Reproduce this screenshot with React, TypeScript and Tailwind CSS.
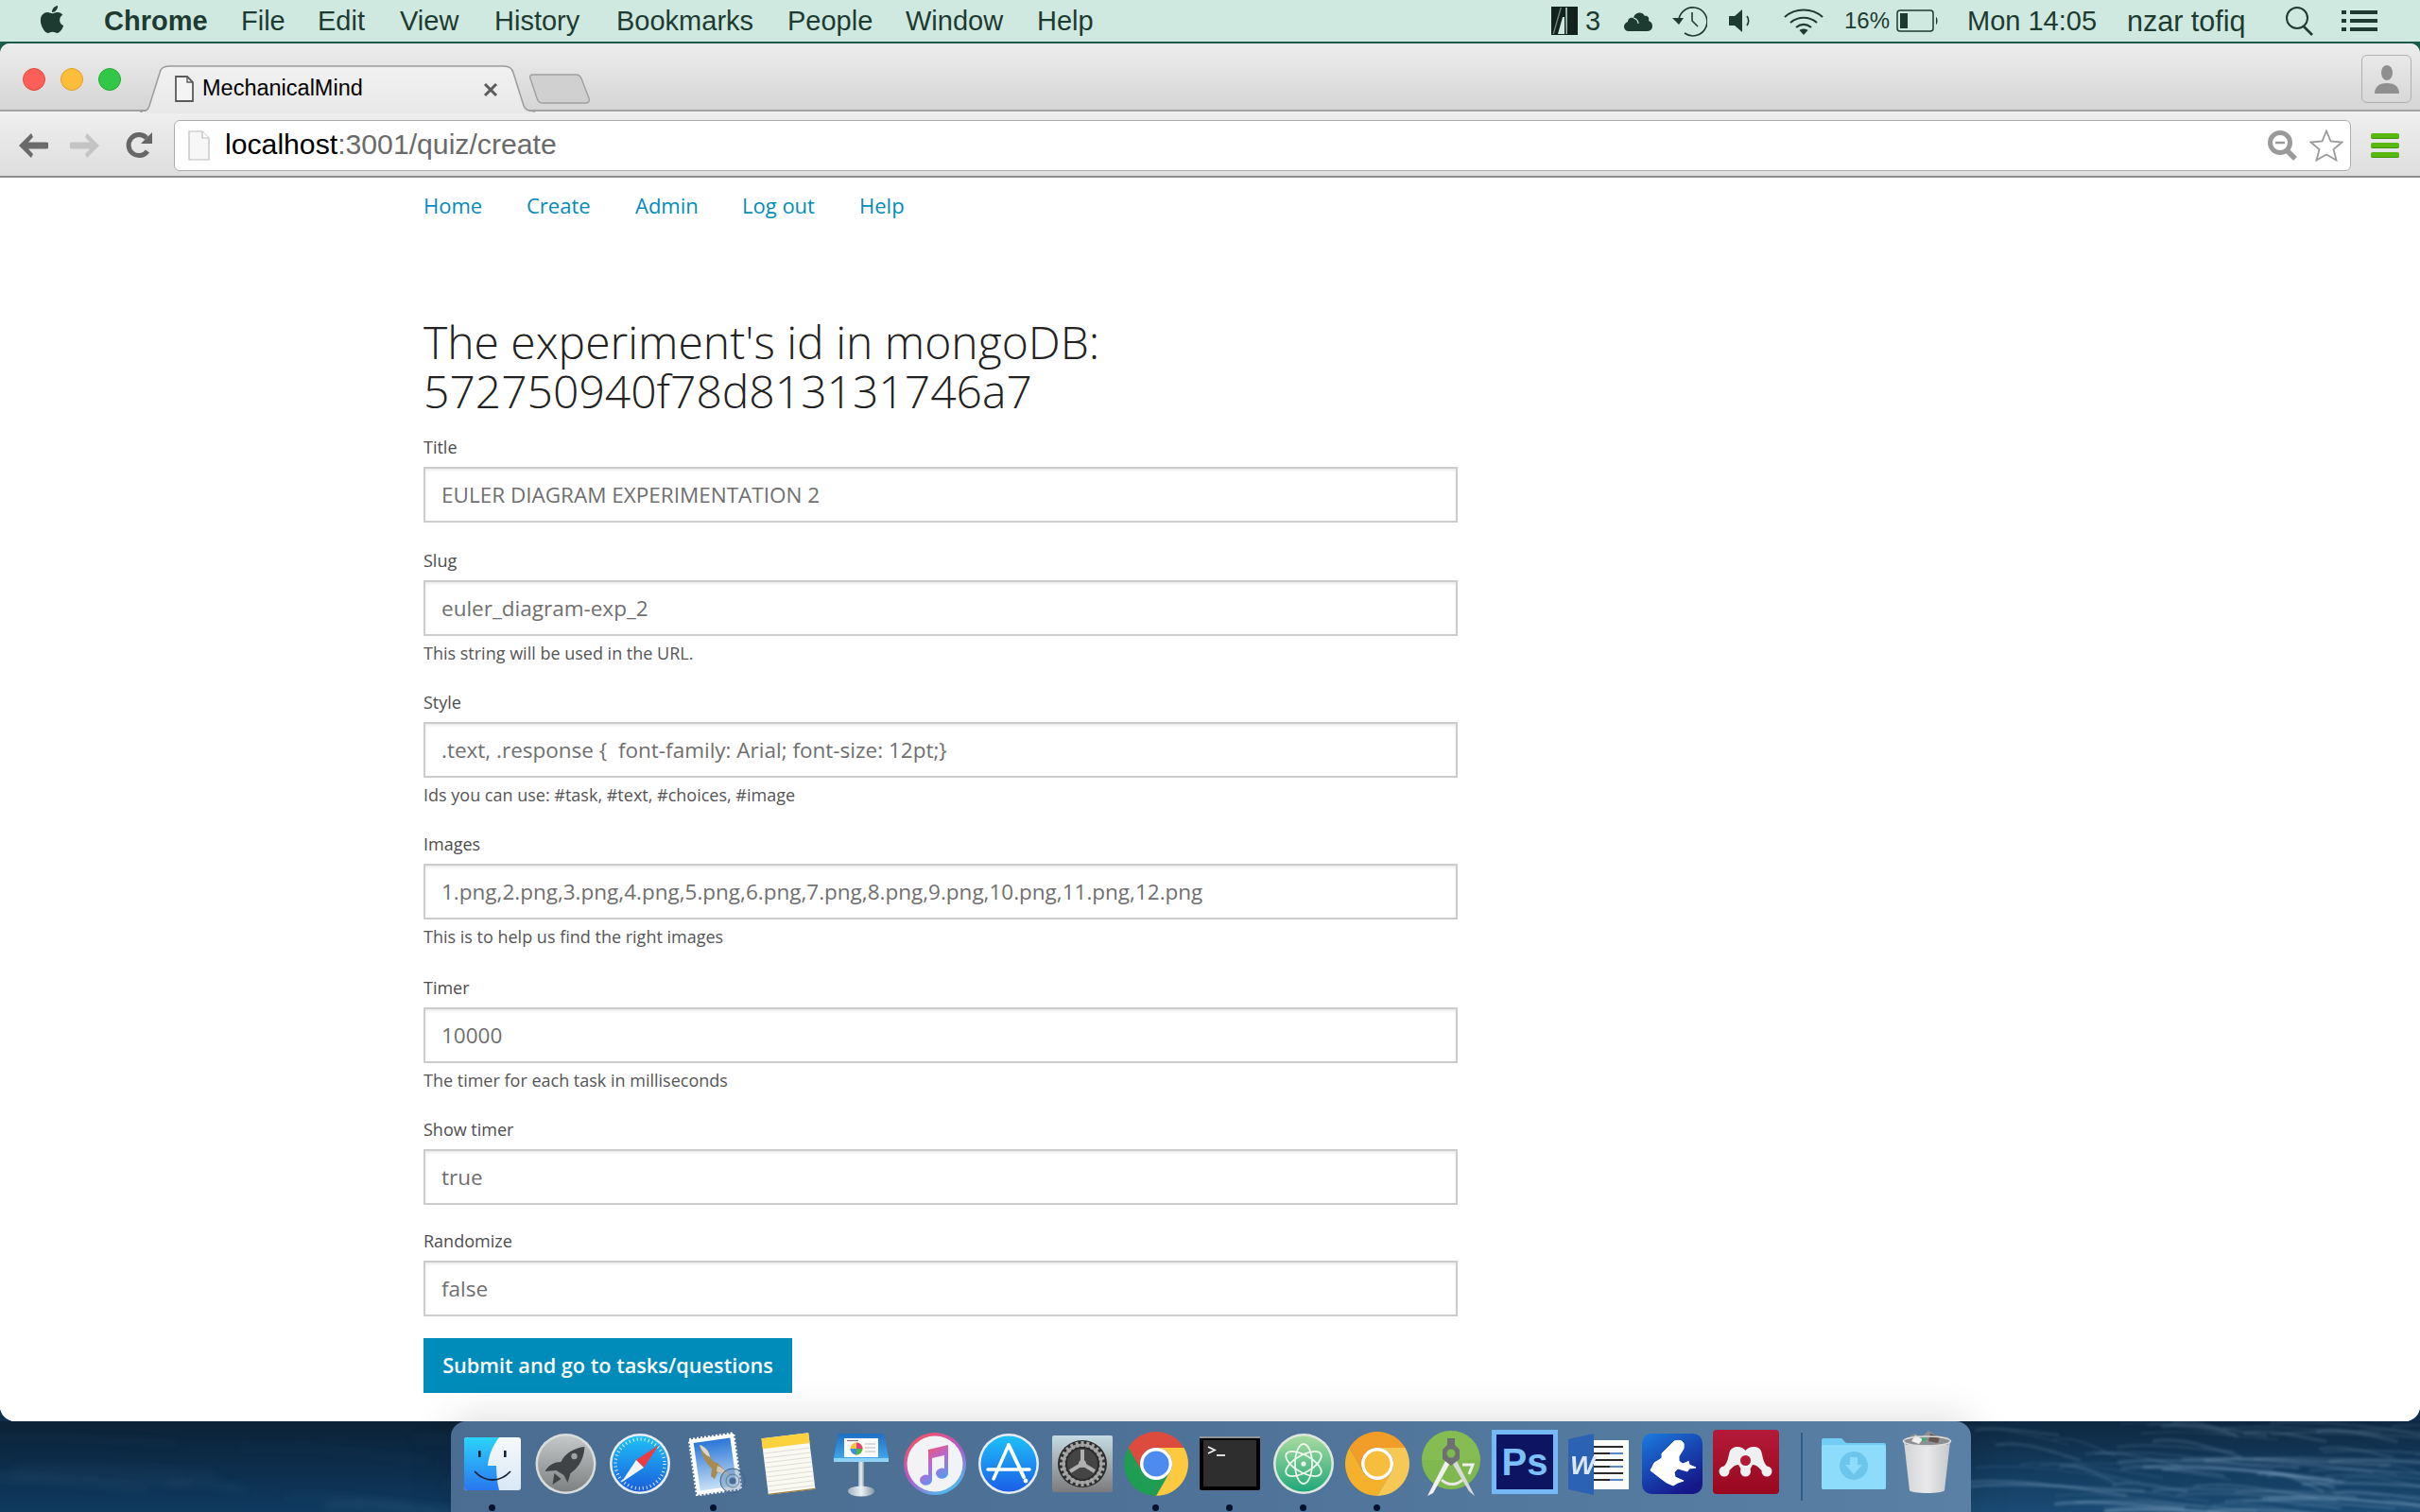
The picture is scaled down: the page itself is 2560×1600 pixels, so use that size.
import React from "react";
import { FaApple } from "react-icons/fa";

const MENU = "[font-family:'Liberation_Sans',sans-serif]";

/* ---------- wallpaper streaks ---------- */
function streaks(x0: number, x1: number, n: number, seed: number) {
  let s = seed;
  const r = () => {
    s = (s * 16807) % 2147483647;
    return s / 2147483647;
  };
  const out: { d: string; o: number; w: number }[] = [];
  for (let i = 0; i < n; i++) {
    const x = x0 + r() * (x1 - x0);
    const y = r() * 96;
    const l = 60 + r() * 170;
    const dy = 4 + r() * 14;
    out.push({
      d: `M${x} ${y} C${x + l * 0.3} ${y - 5} ${x + l * 0.6} ${y + dy * 0.3} ${x + l} ${y + dy}`,
      o: 0.1 + (y / 96) * 0.28 * r() + 0.06,
      w: 1 + r() * 2.5,
    });
  }
  return out;
}
const RIGHT_STREAKS = streaks(2060, 2560, 70, 4711);
const LEFT_STREAKS = streaks(-60, 470, 10, 917);

function Wallpaper() {
  return (
    <svg className="absolute left-0 bottom-0 w-[2560px] h-[96px]" viewBox="0 0 2560 96" preserveAspectRatio="none">
      <defs>
        <linearGradient id="wpL" x1="0" y1="0" x2="0" y2="1">
          <stop offset="0" stopColor="#0d2235" />
          <stop offset="0.45" stopColor="#0c2c49" />
          <stop offset="1" stopColor="#0f3a60" />
        </linearGradient>
        <linearGradient id="wpR" x1="0" y1="0" x2="0" y2="1">
          <stop offset="0" stopColor="#0e2840" />
          <stop offset="0.5" stopColor="#133a5c" />
          <stop offset="1" stopColor="#1a4b74" />
        </linearGradient>
        <filter id="blur1" x="-10%" y="-100%" width="120%" height="300%">
          <feGaussianBlur stdDeviation="1.4" />
        </filter>
        <filter id="blur2" x="-10%" y="-100%" width="120%" height="300%">
          <feGaussianBlur stdDeviation="5" />
        </filter>
      </defs>
      <rect x="0" y="0" width="1300" height="96" fill="url(#wpL)" />
      <rect x="1300" y="0" width="1260" height="96" fill="url(#wpR)" />
      <g filter="url(#blur2)" fill="none" stroke="#7fa6c6">
        {LEFT_STREAKS.map((p, i) => (
          <path key={i} d={p.d} strokeWidth={p.w + 3} opacity={p.o * 0.3} />
        ))}
      </g>
      <g filter="url(#blur1)" fill="none" stroke="#8fb2cf">
        {RIGHT_STREAKS.map((p, i) => (
          <path key={i} d={p.d} strokeWidth={p.w} opacity={p.o} />
        ))}
      </g>
    </svg>
  );
}

/* ---------- menu bar ---------- */
function AdobeIcon() {
  return (
    <svg className="w-[28px] h-[30px]" viewBox="0 0 28 30">
      <rect width="28" height="30" fill="#12231d" />
      <path d="M15 1 L17 1 L17 29 L15.5 29 Z" fill="#9fb5ac" />
      <path d="M12 11 L14 11 L14 29 L7 29 Z" fill="#cfe9e0" />
      <path d="M9.5 1 L11 1 L3 29 L1.5 29 Z" fill="#6e8279" />
    </svg>
  );
}
function CloudIcon() {
  return (
    <svg className="w-[34px] h-[24px]" viewBox="0 0 34 24">
      <path d="M7 23 C1 23 0 15 6 13 C6 9 10 8 12 9 C13 3 21 1 24 7 C27 6 29 9 28 12 C34 14 33 23 27 23 Z" fill="#1d3b31" />
      <path d="M12 9 C15 10 17 12 17 15" stroke="#cfe9e0" strokeWidth="1.2" fill="none" />
    </svg>
  );
}
function ClockIcon() {
  return (
    <svg className="w-[38px] h-[34px]" viewBox="0 0 38 34" fill="none" stroke="#1d3b31" strokeWidth="1.6">
      <path d="M8 20 A15 15 0 1 1 14 30" />
      <path d="M1 14 L8 21 L13 14 Z" fill="#1d3b31" stroke="none" />
      <path d="M22 8 L22 17 L28 23" />
    </svg>
  );
}
function SpeakerIcon() {
  return (
    <svg className="w-[26px] h-[26px]" viewBox="0 0 26 26">
      <path d="M0 8 H6 L14 1 V25 L6 18 H0 Z" fill="#1d3b31" />
      <path d="M19 8 C21 11 21 15 19 18" stroke="#1d3b31" strokeWidth="1.6" fill="none" />
    </svg>
  );
}
function WifiIcon() {
  return (
    <svg className="w-[44px] h-[30px]" viewBox="0 0 44 30" fill="none" stroke="#1d3b31" strokeWidth="2.2">
      <path d="M2 11 C13 1 31 1 42 11" />
      <path d="M8 17 C16 10 28 10 36 17" />
      <path d="M14 22 C19 18 25 18 30 22" />
      <path d="M17.5 25 L22 30 L26.5 25 C24 23 20 23 17.5 25 Z" fill="#1d3b31" stroke="none" />
    </svg>
  );
}
function BatteryIcon() {
  return (
    <svg className="w-[46px] h-[24px]" viewBox="0 0 46 24">
      <rect x="1" y="1" width="38" height="22" rx="3" fill="none" stroke="#1d3b31" strokeWidth="1.5" />
      <rect x="4" y="4" width="8" height="16" fill="#1d3b31" />
      <path d="M42 8 C44 9 44 15 42 16 Z" fill="#1d3b31" />
    </svg>
  );
}
function SearchIcon() {
  return (
    <svg className="w-[31px] h-[32px]" viewBox="0 0 31 32" fill="none" stroke="#1d3b31" strokeWidth="2">
      <circle cx="13" cy="13" r="11" />
      <path d="M20 22 L29 31" strokeWidth="2.6" />
    </svg>
  );
}
function ListIcon() {
  return (
    <svg className="w-[38px] h-[22px]" viewBox="0 0 38 22" fill="#1d3b31">
      <rect x="0" y="0" width="5" height="4" />
      <rect x="9" y="0" width="29" height="4" />
      <rect x="0" y="9" width="5" height="4" />
      <rect x="9" y="9" width="29" height="4" />
      <rect x="0" y="18" width="5" height="4" />
      <rect x="9" y="18" width="29" height="4" />
    </svg>
  );
}

function MenuBar() {
  return (
    <div className={`${MENU} h-[46px] shrink-0 flex items-center bg-[#cfe9e0] border-b-2 border-[#1c5a4a] text-[#1d3b31] text-[29px] leading-none whitespace-nowrap`}>
      <FaApple className="ml-[39px] w-[32px] h-[33px] text-[#1d3b31] -mt-[3px]" />
      <span className="ml-[39px] font-bold w-[145px]">Chrome</span>
      <span className="w-[81px]">File</span>
      <span className="w-[87px]">Edit</span>
      <span className="w-[100px]">View</span>
      <span className="w-[129px]">History</span>
      <span className="w-[181px]">Bookmarks</span>
      <span className="w-[125px]">People</span>
      <span className="w-[139px]">Window</span>
      <span>Help</span>
      <div className="ml-auto flex items-center mr-[45px]">
        <AdobeIcon />
        <span className="ml-[8px] w-[39px]">3</span>
        <CloudIcon />
        <span className="w-[18px]" />
        <ClockIcon />
        <span className="w-[23px]" />
        <SpeakerIcon />
        <span className="w-[31px]" />
        <WifiIcon />
        <span className="ml-[21px] w-[55px] text-[24px]">16%</span>
        <BatteryIcon />
        <span className="ml-[29px] w-[169px]">Mon 14:05</span>
        <span className="w-[167px] text-[30.5px]">nzar tofiq</span>
        <SearchIcon />
        <span className="w-[29px]" />
        <ListIcon />
      </div>
    </div>
  );
}

/* ---------- browser chrome ---------- */
function PageIcon({ big }: { big?: boolean }) {
  return big ? (
    <svg className="w-[23px] h-[32px]" viewBox="0 0 23 32">
      <path d="M1 1 H15 L22 8 V31 H1 Z" fill="#f7f7f7" stroke="#bdbdbd" strokeWidth="1.2" />
      <path d="M15 1 V8 H22" fill="#fff" stroke="#bdbdbd" strokeWidth="1.2" />
    </svg>
  ) : (
    <svg className="w-[20px] h-[28px]" viewBox="0 0 20 28">
      <path d="M1 1 H13 L19 7 V27 H1 Z" fill="#f4f4f4" stroke="#5a5a5a" strokeWidth="1.8" />
      <path d="M13 1 V7 H19" fill="none" stroke="#5a5a5a" strokeWidth="1.4" />
    </svg>
  );
}

function TabStrip() {
  return (
    <div className="h-[72px] shrink-0 flex items-start bg-gradient-to-b from-[#ededed] to-[#d5d5d5] border-b-2 border-[#a3a3a3] rounded-t-[10px]">
      <div className="flex gap-[16px] ml-[24px] mt-[26px]">
        <div className="w-[24px] h-[24px] rounded-full bg-[#fc5f57] border border-[#e14942]" />
        <div className="w-[24px] h-[24px] rounded-full bg-[#fdbc3a] border border-[#dfa023]" />
        <div className="w-[24px] h-[24px] rounded-full bg-[#33c748] border border-[#27aa35]" />
      </div>
      <div className="relative ml-[20px] mt-[23px] w-[420px] h-[51px] shrink-0">
        <svg className="absolute inset-0 w-full h-full" viewBox="0 0 420 51">
          <defs>
            <linearGradient id="tabG" x1="0" y1="0" x2="0" y2="1">
              <stop offset="0" stopColor="#f1f1f1" />
              <stop offset="1" stopColor="#e9e9e9" />
            </linearGradient>
          </defs>
          <path d="M0 49 C8 49 9 46 10 43 L21 8 C22 3 26 1 31 1 H385 C391 1 394 4 395 8 L406 43 C407 46 409 49 418 49" fill="url(#tabG)" stroke="#9b9b9b" strokeWidth="1.5" />
          <rect x="3" y="49" width="412" height="2" fill="#e9e9e9" />
        </svg>
        <div className="relative flex items-center h-full pl-[37px] pb-[2px]">
          <PageIcon />
          <span className={`${MENU} ml-[9px] text-[23.5px] leading-none text-black`}>MechanicalMind</span>
          <svg className="ml-[127px] mt-[2px] w-[16px] h-[16px]" viewBox="0 0 16 16" stroke="#5c5c5c" strokeWidth="3">
            <path d="M2 2 L14 14 M14 2 L2 14" />
          </svg>
        </div>
      </div>
      <svg className="mt-[32px] w-[64px] h-[32px] shrink-0 -ml-[8px]" viewBox="0 0 64 32">
        <path d="M3 1 H50 C53 1 54 3 55 5 L63 26 C64 30 62 31 59 31 H14 C11 31 9 29 8 26 L1 5 C0 3 1 1 3 1 Z" fill="#d0d0d0" stroke="#9f9f9f" strokeWidth="1.4" />
      </svg>
      <div className="ml-auto mr-[9px] mt-[12px] w-[53px] h-[51px] rounded-[6px] border border-[#b0b0b0] flex items-center justify-center">
        <svg className="w-[26px] h-[30px]" viewBox="0 0 26 30" fill="#8f8f8f">
          <ellipse cx="13" cy="8" rx="6" ry="8" />
          <path d="M0 30 C0 22 6 19 13 19 C20 19 26 22 26 30 Z" />
        </svg>
      </div>
    </div>
  );
}

function Toolbar() {
  return (
    <div className="h-[70px] pt-[3px] shrink-0 flex items-center bg-gradient-to-b from-[#efefef] to-[#dedede] border-b-2 border-[#8e8e8e]">
      <svg className="ml-[19px] w-[32px] h-[28px]" viewBox="0 0 32 28">
        <path d="M14 1 L1 14 L14 27 L16 23 L11 17.5 H30 A3 3 0 0 0 30 10.5 H11 L16 5 Z" fill="#6a6a6a" />
      </svg>
      <svg className="ml-[23px] w-[32px] h-[28px]" viewBox="0 0 32 28">
        <path d="M18 1 L31 14 L18 27 L16 23 L21 17.5 H2 A3 3 0 0 1 2 10.5 H21 L16 5 Z" fill="#c4c4c4" />
      </svg>
      <svg className="ml-[27px] w-[29px] h-[29px]" viewBox="0 0 29 29" fill="none">
        <path d="M23 21 A11 11 0 1 1 22 7" stroke="#666" strokeWidth="5" />
        <path d="M28 1 V13 H16 Z" fill="#666" />
      </svg>
      <div className="ml-[22px] h-[54px] w-[2303px] rounded-[6px] bg-white border border-[#adadad] flex items-center pl-[14px] pr-[7px]">
        <PageIcon big />
        <span className={`${MENU} ml-[16px] text-[30.2px] leading-none text-black`}>
          localhost<span className="text-[#6a6a6a]">:3001/quiz/create</span>
        </span>
        <svg className="ml-auto w-[32px] h-[32px]" viewBox="0 0 32 32" fill="none" stroke="#9a9a9a">
          <circle cx="13" cy="13" r="10.5" strokeWidth="5" />
          <path d="M20 21 L29 30" strokeWidth="5.5" />
          <path d="M8 13 H18" strokeWidth="2.6" />
        </svg>
        <svg className="ml-[12px] w-[36px] h-[34px]" viewBox="0 0 36 34" fill="#fff" stroke="#9a9a9a" strokeWidth="1.8">
          <path d="M18 1.5 L22.5 12.5 L34.5 13.5 L25.5 21 L28.5 32.5 L18 26.5 L7.5 32.5 L10.5 21 L1.5 13.5 L13.5 12.5 Z" />
        </svg>
      </div>
      <div className="ml-[21px] w-[30px] flex flex-col gap-[4px]">
        <div className="h-[6px] rounded-[2px] bg-[#58b80f] border-b border-[#3f8f08]" />
        <div className="h-[6px] rounded-[2px] bg-[#58b80f] border-b border-[#3f8f08]" />
        <div className="h-[6px] rounded-[2px] bg-[#58b80f] border-b border-[#3f8f08]" />
      </div>
    </div>
  );
}

/* ---------- form ---------- */
const BODY = "[font-family:'Open_Sans',sans-serif]";

function Field({ label, value, help, cls }: { label: string; value: string; help?: string; cls: string }) {
  return (
    <div className={cls}>
      <label className="block h-[24px] text-[18px] leading-[22px] text-[#4d4d4d]">{label}</label>
      <input
        readOnly
        value={value}
        className="mt-[8px] block w-[1094px] h-[59px] border-2 border-[#cccccc] bg-white px-[17px] text-[22.5px] text-[#6f6f6f] outline-none shadow-[inset_0_2px_3px_rgba(0,0,0,0.08)]"
      />
      {help && <p className="mt-[7px] h-[24px] text-[18px] leading-[22px] text-[#555555]">{help}</p>}
    </div>
  );
}

function Page() {
  return (
    <div className={`${BODY} flex-1 bg-white pl-[448px] overflow-hidden`}>
      <nav className="flex h-[60px] pt-[14px] text-[22px] leading-[30px] text-[#008cba]">
        <a className="w-[109px]">Home</a>
        <a className="w-[115px]">Create</a>
        <a className="w-[113px]">Admin</a>
        <a className="w-[124px]">Log out</a>
        <a>Help</a>
      </nav>
      <h3 className="mt-[88px] w-[1100px] text-[48px] leading-[52px] font-light text-[#222222]">
        The experiment's id in mongoDB:
        <br />
        572750940f78d813131746a7
      </h3>
      <Field cls="mt-[22px]" label="Title" value="EULER DIAGRAM EXPERIMENTATION 2" />
      <Field cls="mt-[29px]" label="Slug" value="euler_diagram-exp_2" help="This string will be used in the URL." />
      <Field cls="mt-[28px]" label="Style" value=".text, .response {  font-family: Arial; font-size: 12pt;}" help="Ids you can use: #task, #text, #choices, #image" />
      <Field cls="mt-[28px]" label="Images" value="1.png,2.png,3.png,4.png,5.png,6.png,7.png,8.png,9.png,10.png,11.png,12.png" help="This is to help us find the right images" />
      <Field cls="mt-[30px]" label="Timer" value="10000" help="The timer for each task in milliseconds" />
      <Field cls="mt-[28px]" label="Show timer" value="true" />
      <Field cls="mt-[27px]" label="Randomize" value="false" />
      <button className="mt-[23px] block w-[390px] h-[58px] bg-[#008cba] text-white text-[21.7px] font-semibold">
        Submit and go to tasks/questions
      </button>
    </div>
  );
}

/* ---------- dock icons ---------- */
function Finder() {
  return (
    <svg className="w-full h-full" viewBox="0 0 60 56">
      <defs>
        <linearGradient id="fL" x1="0" y1="0" x2="0" y2="1">
          <stop offset="0" stopColor="#2bd3fb" />
          <stop offset="1" stopColor="#2a76ef" />
        </linearGradient>
        <linearGradient id="fR" x1="0" y1="0" x2="0" y2="1">
          <stop offset="0" stopColor="#f6f9fb" />
          <stop offset="1" stopColor="#d9e8f6" />
        </linearGradient>
      </defs>
      <rect width="60" height="56" rx="3" fill="url(#fR)" />
      <path d="M3 0 H37 C31 8 26 18 25 30 H34 C34 38 35 48 37 56 H3 A3 3 0 0 1 0 53 V3 A3 3 0 0 1 3 0 Z" fill="url(#fL)" />
      <rect x="15" y="14" width="2.6" height="7" fill="#14233a" />
      <rect x="42" y="14" width="2.6" height="7" fill="#14233a" />
      <path d="M11 36 C22 48 38 48 49 36" fill="none" stroke="#14233a" strokeWidth="1.8" />
    </svg>
  );
}
function Launchpad() {
  return (
    <svg className="w-full h-full" viewBox="0 0 64 64">
      <defs>
        <linearGradient id="lp" x1="0" y1="0" x2="0" y2="1">
          <stop offset="0" stopColor="#c5c8c9" />
          <stop offset="1" stopColor="#7d8182" />
        </linearGradient>
      </defs>
      <circle cx="32" cy="32" r="32" fill="#d9dcdc" />
      <circle cx="32" cy="32" r="29.5" fill="url(#lp)" />
      <path d="M52 14 C51 30 43 38 37 42 L34 52 L30 44 L22 39 L10 40 C14 33 20 30 27 30 C31 21 41 15 52 14 Z" fill="#3f4345" />
      <path d="M20 42 L27 48 L18 54 Z" fill="#3f4345" />
      <circle cx="41" cy="24" r="3.2" fill="#9da1a2" />
    </svg>
  );
}
function Safari() {
  return (
    <svg className="w-full h-full" viewBox="0 0 64 64">
      <defs>
        <linearGradient id="sf" x1="0" y1="0" x2="0" y2="1">
          <stop offset="0" stopColor="#1fc0f6" />
          <stop offset="1" stopColor="#1a5edd" />
        </linearGradient>
      </defs>
      <circle cx="32" cy="32" r="32" fill="#e8eef3" />
      <circle cx="32" cy="32" r="29.5" fill="url(#sf)" />
      <circle cx="32" cy="32" r="26" fill="none" stroke="#fff" strokeWidth="3.5" strokeDasharray="1 3.08" opacity="0.85" />
      <path d="M52 12 L36 36 L28 28 Z" fill="#ee3a40" />
      <path d="M12 52 L28 28 L36 36 Z" fill="#f3f4f5" />
    </svg>
  );
}
function Mail() {
  return (
    <svg className="w-full h-full" viewBox="0 0 65 68">
      <defs>
        <linearGradient id="ml" x1="0" y1="0" x2="0" y2="1">
          <stop offset="0" stopColor="#2a76d8" />
          <stop offset="1" stopColor="#c5e0f4" />
        </linearGradient>
      </defs>
      <g transform="rotate(-8 30 34)">
        <rect x="7" y="5" width="47" height="59" fill="#fff" />
        <rect x="7" y="5" width="47" height="59" fill="none" stroke="#fff" strokeWidth="3" strokeDasharray="2 2" />
        <rect x="11" y="9" width="39" height="51" fill="url(#ml)" />
      </g>
      <path d="M14 14 C20 16 24 20 25 26 L29 32 L33 33 L47 47 C41 43 36 44 33 43 L30 50 L26 47 L27 39 C20 33 16 24 14 14 Z" fill="#a8894f" />
      <path d="M14 14 C20 16 24 20 25 27 C20 25 16 20 14 14 Z" fill="#dcd8cf" />
      <path d="M33 36 C38 38 42 42 47 47 C41 45 36 44 32 42 Z" fill="#cfc9bb" />
      <circle cx="49" cy="52" r="13" fill="#5578a0" fillOpacity="0.35" stroke="#3f6188" strokeWidth="1" />
      <circle cx="49" cy="52" r="7" fill="none" stroke="#3f6188" strokeWidth="1" opacity="0.7" />
      <circle cx="49" cy="52" r="3.5" fill="#4a6c94" />
    </svg>
  );
}
function Notes() {
  return (
    <svg className="w-full h-full" viewBox="0 0 59 67">
      <g transform="rotate(-7 30 34)">
        <rect x="5" y="4" width="50" height="60" fill="#fbfaf2" />
        <rect x="5" y="4" width="50" height="11" fill="#fcd23f" />
        {[20, 25, 30, 35, 40, 45, 50, 55, 60].map((y) => (
          <path key={y} d={`M5 ${y} H55`} stroke="#d6d6d0" strokeWidth="0.8" />
        ))}
        <rect x="5" y="63" width="50" height="1.2" fill="#9c7e3b" />
      </g>
    </svg>
  );
}
function Keynote() {
  return (
    <svg className="w-full h-full" viewBox="0 0 58 67">
      <defs>
        <linearGradient id="kn" x1="0" y1="0" x2="0" y2="1">
          <stop offset="0" stopColor="#1c6fc6" />
          <stop offset="1" stopColor="#3fa6ec" />
        </linearGradient>
        <linearGradient id="kp" x1="0" y1="0" x2="1" y2="0">
          <stop offset="0" stopColor="#9eb2c2" />
          <stop offset="0.5" stopColor="#eef2f5" />
          <stop offset="1" stopColor="#8397a7" />
        </linearGradient>
      </defs>
      <rect x="26" y="30" width="6" height="28" fill="url(#kp)" />
      <ellipse cx="29" cy="61" rx="14" ry="5.5" fill="url(#kp)" />
      <path d="M5 0 H53 L58 26 H0 Z" fill="url(#kn)" />
      <rect x="0" y="26" width="58" height="4" fill="#8ed2f6" />
      <rect x="11" y="5" width="36" height="20" fill="#fafafa" />
      <circle cx="24" cy="16" r="6.5" fill="#f2c53d" />
      <path d="M24 16 V9.5 A6.5 6.5 0 0 1 30.5 16 Z" fill="#e0417a" />
      <path d="M24 16 H30.5 A6.5 6.5 0 0 1 24 22.5 Z" fill="#4cb548" />
      <path d="M24 16 V22.5 A6.5 6.5 0 0 1 17.5 16 Z" fill="#3f8fdf" />
      <path d="M33 11 H44 M33 15 H44 M33 19 H44" stroke="#cfcfcf" strokeWidth="1.6" />
      <path d="M14 7.5 H26" stroke="#777" strokeWidth="1.2" />
    </svg>
  );
}
function ITunes() {
  return (
    <svg className="w-full h-full" viewBox="0 0 66 66">
      <defs>
        <linearGradient id="ir" x1="0.2" y1="0" x2="0.8" y2="1">
          <stop offset="0" stopColor="#f9525f" />
          <stop offset="0.5" stopColor="#b45ad0" />
          <stop offset="1" stopColor="#3dcaf0" />
        </linearGradient>
        <linearGradient id="in" x1="0.2" y1="0" x2="0.7" y2="1">
          <stop offset="0" stopColor="#f9505f" />
          <stop offset="0.5" stopColor="#b26ad8" />
          <stop offset="1" stopColor="#47a3f0" />
        </linearGradient>
      </defs>
      <circle cx="33" cy="33" r="33" fill="url(#ir)" />
      <circle cx="33" cy="33" r="29.5" fill="#f1f3f5" />
      <path d="M26 18 L47 13 V43 A6.5 5.6 0 1 1 43 38 V24 L30 27 V50 A6.5 5.6 0 1 1 26 45 Z" fill="url(#in)" />
    </svg>
  );
}
function AppStore() {
  return (
    <svg className="w-full h-full" viewBox="0 0 64 64">
      <defs>
        <linearGradient id="as" x1="0" y1="0" x2="0" y2="1">
          <stop offset="0" stopColor="#1dc0f8" />
          <stop offset="1" stopColor="#1c5ee8" />
        </linearGradient>
      </defs>
      <circle cx="32" cy="32" r="32" fill="#e6edf2" />
      <circle cx="32" cy="32" r="29.5" fill="url(#as)" />
      <g stroke="#fff" fill="none" strokeLinecap="round">
        <path d="M10 38 H54" strokeWidth="3.5" />
        <path d="M32 12 L16 48" strokeWidth="3.5" />
        <path d="M32 12 L48 46" strokeWidth="4" />
      </g>
      <circle cx="50" cy="50" r="2.4" fill="#fff" />
    </svg>
  );
}
function Prefs() {
  const teeth = Array.from({ length: 24 }, (_, i) => i * 15);
  return (
    <svg className="w-full h-full" viewBox="0 0 64 60">
      <defs>
        <linearGradient id="pf" x1="0" y1="0" x2="0" y2="1">
          <stop offset="0" stopColor="#c6dbe3" />
          <stop offset="1" stopColor="#7b7b7b" />
        </linearGradient>
      </defs>
      <rect width="64" height="60" rx="2" fill="url(#pf)" />
      <ellipse cx="32" cy="30" rx="26" ry="25" fill="#2d2d2d" />
      <circle cx="32" cy="30" r="20" fill="none" stroke="#9a9a9a" strokeWidth="3" />
      {teeth.map((a) => (
        <rect key={a} x="30.5" y="6" width="3" height="6" fill="#a6a6a6" transform={`rotate(${a} 32 30)`} />
      ))}
      <circle cx="32" cy="30" r="16" fill="#454545" />
      <g stroke="#b0b0b0" strokeWidth="4">
        <path d="M32 30 V15" />
        <path d="M32 30 L19 38" />
        <path d="M32 30 L45 38" />
      </g>
      <circle cx="32" cy="30" r="4" fill="#b0b0b0" />
    </svg>
  );
}
function ChromeLogo({ a, b, c, d }: { a: string; b: string; c: string; d: string }) {
  return (
    <svg className="w-full h-full" viewBox="0 0 100 100">
      <path d="M6.7 25 A50 50 0 0 1 93.3 25 H50 A25 25 0 0 0 28.35 62.5 Z" fill={a} />
      <path d="M6.7 25 A50 50 0 0 0 50 100 L71.65 62.5 A25 25 0 0 1 28.35 62.5 Z" fill={b} />
      <path d="M50 100 A50 50 0 0 0 93.3 25 H50 A25 25 0 0 1 71.65 62.5 Z" fill={c} />
      <circle cx="50" cy="50" r="25" fill="#fff" />
      <circle cx="50" cy="50" r="20" fill={d} />
    </svg>
  );
}
function Terminal() {
  return (
    <svg className="w-full h-full" viewBox="0 0 64 57">
      <rect width="64" height="57" rx="2" fill="#000" />
      <rect x="0" y="0" width="64" height="2" fill="#8f949a" />
      <rect x="4" y="4" width="56" height="49" fill="#2e2e2e" />
      <path d="M9 11 L16 14.5 L9 18" stroke="#f2f2f2" strokeWidth="1.8" fill="none" />
      <path d="M18 20 H27" stroke="#f2f2f2" strokeWidth="1.8" />
    </svg>
  );
}
function Atom() {
  return (
    <svg className="w-full h-full" viewBox="0 0 64 64">
      <defs>
        <linearGradient id="at" x1="0" y1="0" x2="0" y2="1">
          <stop offset="0" stopColor="#a9dba0" />
          <stop offset="1" stopColor="#1fa878" />
        </linearGradient>
      </defs>
      <circle cx="32" cy="32" r="32" fill="#dfe7df" />
      <circle cx="32" cy="32" r="29.5" fill="url(#at)" />
      <g fill="none" stroke="#eef7ee" strokeWidth="1.8">
        <ellipse cx="32" cy="32" rx="21" ry="9" transform="rotate(30 32 32)" />
        <ellipse cx="32" cy="32" rx="21" ry="9" transform="rotate(-30 32 32)" />
        <ellipse cx="32" cy="32" rx="9" ry="21" />
      </g>
      <circle cx="32" cy="32" r="2.6" fill="#eef7ee" />
    </svg>
  );
}
function AndroidStudio() {
  return (
    <svg className="w-full h-full" viewBox="0 0 62 70">
      <circle cx="31" cy="31" r="31" fill="#7fb84e" />
      <path d="M0 31 A31 31 0 0 1 62 31 Z" fill="#8cc158" opacity="0.5" />
      <path d="M21 52 C27 58 37 58 43 52" fill="none" stroke="#e8e8e8" strokeWidth="3" />
      <path d="M26 30 L6 69 L12 66 L30 34 Z" fill="#f0f0f0" />
      <path d="M36 30 L56 69 L50 64 L32 34 Z" fill="#d9d9d9" />
      <path d="M27 15 V8 H35 V15 L40 20 V30 L31 37 L22 30 V20 Z" fill="#6d7073" />
      <circle cx="31" cy="24" r="4.5" fill="#7fb84e" />
      <path d="M43 36 H54 L50 46" fill="none" stroke="#f0f0f0" strokeWidth="3" />
    </svg>
  );
}
function Photoshop() {
  return (
    <div className="w-full h-full border-[5px] border-[#74b8f5] bg-[#0d1563] flex items-center justify-center">
      <span className="[font-family:'Liberation_Sans',sans-serif] font-bold text-[40px] leading-none text-[#7cc0fa]">Ps</span>
    </div>
  );
}
function Word() {
  return (
    <svg className="w-full h-full" viewBox="0 0 64 65">
      <rect x="26" y="7" width="38" height="52" fill="#fbfbfb" />
      {[14, 21, 28, 35, 42, 49].map((y, i) => (
        <g key={y}>
          <path d={`M27 ${y} H44`} stroke="#2a2a2a" strokeWidth="2" />
          <path d={`M44 ${y} H58`} stroke={i % 2 ? "#5b87c4" : "#2a2a2a"} strokeWidth="2" />
        </g>
      ))}
      <path d="M0 6 L27 0 V65 L0 59 Z" fill="#2c62b4" />
      <text x="2" y="43" fill="#dbe7f7" fontSize="28" fontWeight="700" fontFamily="Liberation Sans, sans-serif" fontStyle="italic">W</text>
    </svg>
  );
}
function Vuze() {
  return (
    <svg className="w-full h-full" viewBox="0 0 64 64">
      <defs>
        <linearGradient id="vz" x1="0" y1="0" x2="0.6" y2="1">
          <stop offset="0" stopColor="#1a7ce0" />
          <stop offset="1" stopColor="#16188a" />
        </linearGradient>
      </defs>
      <rect width="64" height="64" rx="10" fill="url(#vz)" />
      <path
        d="M34 8 C38 7 42 7 43 9 C45 11 44 14 44 16 L39 24 L39 29 L43 32 L48 30 L49 29 L50 33 L57 36 L50 37 L48 40 L38 37 L34 41 L35 46 L44 50 L38 52 L33 55 L26 52 L18 46 L9 39 L13 31 L21 26 L21 21 L28 14 Z"
        fill="#fff"
        stroke="#fff"
        strokeWidth="1"
        strokeLinejoin="round"
      />
    </svg>
  );
}
function Mendeley() {
  return (
    <svg className="w-full h-full" viewBox="0 0 70 68">
      <defs>
        <linearGradient id="md" x1="0" y1="0" x2="0" y2="1">
          <stop offset="0" stopColor="#b41a38" />
          <stop offset="1" stopColor="#98081f" />
        </linearGradient>
      </defs>
      <rect width="70" height="68" rx="4" fill="url(#md)" />
      <g fill="#eef0f2">
        <circle cx="12" cy="44" r="5.5" />
        <circle cx="34.5" cy="44" r="5.5" />
        <circle cx="57" cy="44" r="5.5" />
        <path d="M10 40 C15 37 16 30 17 26 C18 19 23 18 26 18 C30 18 33 20 34.5 22 C36 20 39 18 43 18 C47 18 51 19 52 26 C53 30 54 37 59 40 L55 46 C50 42 47 37 42 37 L38 44 H31 L27 37 C22 37 19 42 14 46 Z" />
      </g>
      <circle cx="34.5" cy="32.5" r="5.5" fill="#b41a38" />
    </svg>
  );
}
function Downloads() {
  return (
    <svg className="w-full h-full" viewBox="0 0 68 54">
      <path d="M2 0 H20 C23 0 24 5 27 5 H66 A2 2 0 0 1 68 7 V52 A2 2 0 0 1 66 54 H2 A2 2 0 0 1 0 52 V2 A2 2 0 0 1 2 0 Z" fill="#72cdf6" />
      <rect x="0" y="7" width="68" height="47" rx="2" fill="#8edcfb" />
      <circle cx="34" cy="29" r="15" fill="#6cc6ec" />
      <path d="M30 20 H38 V28 H43 L34 38 L25 28 H30 Z" fill="#8edcfb" />
    </svg>
  );
}
function Trash() {
  return (
    <svg className="w-full h-full" viewBox="0 0 53 69">
      <defs>
        <linearGradient id="tr" x1="0" y1="0" x2="1" y2="0">
          <stop offset="0" stopColor="#d2d4d6" />
          <stop offset="0.5" stopColor="#e9e9ea" />
          <stop offset="1" stopColor="#c6c8ca" />
        </linearGradient>
      </defs>
      <path d="M2 12 L8 64 C9 68 44 68 45 64 L51 12 Z" fill="url(#tr)" />
      <path d="M3 10 L14 4 L20 8 L28 1 L36 6 L50 8 L49 16 L4 16 Z" fill="#8e8f92" />
      <path d="M14 6 L22 10 L18 15 L10 12 Z" fill="#f0f0f0" />
      <path d="M30 4 L40 8 L38 14 L28 12 Z" fill="#65574f" />
      <path d="M21 9 L25 8 L25 12 L21 12 Z" fill="#3cb371" />
      <ellipse cx="26.5" cy="12" rx="25" ry="5" fill="none" stroke="#dcdcdc" strokeWidth="1.6" />
    </svg>
  );
}

type DockItem = { key: string; left: string; top: string; size: string; dot?: string; el: React.ReactNode };

const DOCK: DockItem[] = [
  { key: "finder", left: "ml-[14px]", top: "mt-[17px]", size: "w-[60px] h-[56px]", dot: "left-[26px] top-[71px]", el: <Finder /> },
  { key: "launch", left: "ml-[15px]", top: "mt-[13px]", size: "w-[65px] h-[64px]", el: <Launchpad /> },
  { key: "safari", left: "ml-[14px]", top: "mt-[13px]", size: "w-[64px] h-[64px]", el: <Safari /> },
  { key: "mail", left: "ml-[17px]", top: "mt-[11px]", size: "w-[65px] h-[68px]", dot: "left-[25px] top-[77px]", el: <Mail /> },
  { key: "notes", left: "ml-[13px]", top: "mt-[11px]", size: "w-[59px] h-[67px]", el: <Notes /> },
  { key: "keynote", left: "ml-[19px]", top: "mt-[13px]", size: "w-[58px] h-[67px]", el: <Keynote /> },
  { key: "itunes", left: "ml-[16px]", top: "mt-[12px]", size: "w-[66px] h-[66px]", el: <ITunes /> },
  { key: "appstore", left: "ml-[13px]", top: "mt-[13px]", size: "w-[64px] h-[64px]", el: <AppStore /> },
  { key: "prefs", left: "ml-[14px]", top: "mt-[15px]", size: "w-[64px] h-[60px]", el: <Prefs /> },
  {
    key: "chrome", left: "ml-[12px]", top: "mt-[11px]", size: "w-[68px] h-[68px]", dot: "left-[30px] top-[77px]",
    el: <ChromeLogo a="#dd4b3f" b="#1f9d55" c="#fcc93f" d="#4d8bf0" />,
  },
  { key: "term", left: "ml-[12px]", top: "mt-[16px]", size: "w-[64px] h-[57px]", dot: "left-[28px] top-[72px]", el: <Terminal /> },
  { key: "atom", left: "ml-[14px]", top: "mt-[13px]", size: "w-[64px] h-[64px]", dot: "left-[28px] top-[75px]", el: <Atom /> },
  {
    key: "canary", left: "ml-[12px]", top: "mt-[11px]", size: "w-[68px] h-[68px]", dot: "left-[30px] top-[77px]",
    el: <ChromeLogo a="#f29d28" b="#f5b12c" c="#f6c957" d="#f7bd3d" />,
  },
  { key: "android", left: "ml-[13px]", top: "mt-[10px]", size: "w-[62px] h-[70px]", el: <AndroidStudio /> },
  { key: "ps", left: "ml-[12px]", top: "mt-[9px]", size: "w-[70px] h-[68px]", el: <Photoshop /> },
  { key: "word", left: "ml-[11px]", top: "mt-[13px]", size: "w-[64px] h-[65px]", el: <Word /> },
  { key: "vuze", left: "ml-[14px]", top: "mt-[13px]", size: "w-[64px] h-[64px]", el: <Vuze /> },
  { key: "mendeley", left: "ml-[11px]", top: "mt-[9px]", size: "w-[70px] h-[68px]", el: <Mendeley /> },
  { key: "sep", left: "ml-[23px]", top: "mt-[12px]", size: "w-[2px] h-[72px]", el: <div className="w-full h-full bg-[#2f5b86]" /> },
  { key: "dl", left: "ml-[20px]", top: "mt-[18px]", size: "w-[68px] h-[54px]", el: <Downloads /> },
  { key: "trash", left: "ml-[17px]", top: "mt-[9px]", size: "w-[53px] h-[69px]", el: <Trash /> },
];

function Dock() {
  return (
    <div className="relative h-[96px] w-[1608px] ml-[477px] shrink-0 flex items-start rounded-t-[16px] bg-gradient-to-r from-[#4a6d91] via-[#4f7398] to-[#5a80a6] shadow-[0_0_45px_rgba(0,0,0,0.16)]">
      {DOCK.map((d) => (
        <div key={d.key} className={`relative shrink-0 ${d.left} ${d.top} ${d.size}`}>
          {d.el}
          {d.dot && <span className={`absolute w-[7px] h-[7px] rounded-full bg-[#06112e] ${d.dot}`} />}
        </div>
      ))}
    </div>
  );
}

export default function App() {
  return (
    <div className="relative w-[2560px] h-[1600px] overflow-hidden flex flex-col bg-[linear-gradient(#1c5a4a_0px,#1c5a4a_200px,#0f2f4c_200px)]">
      <Wallpaper />
      <MenuBar />
      <div className="relative h-[1458px] shrink-0 flex flex-col rounded-t-[10px] rounded-b-[16px] overflow-hidden bg-white">
        <TabStrip />
        <Toolbar />
        <Page />
      </div>
      <Dock />
    </div>
  );
}
